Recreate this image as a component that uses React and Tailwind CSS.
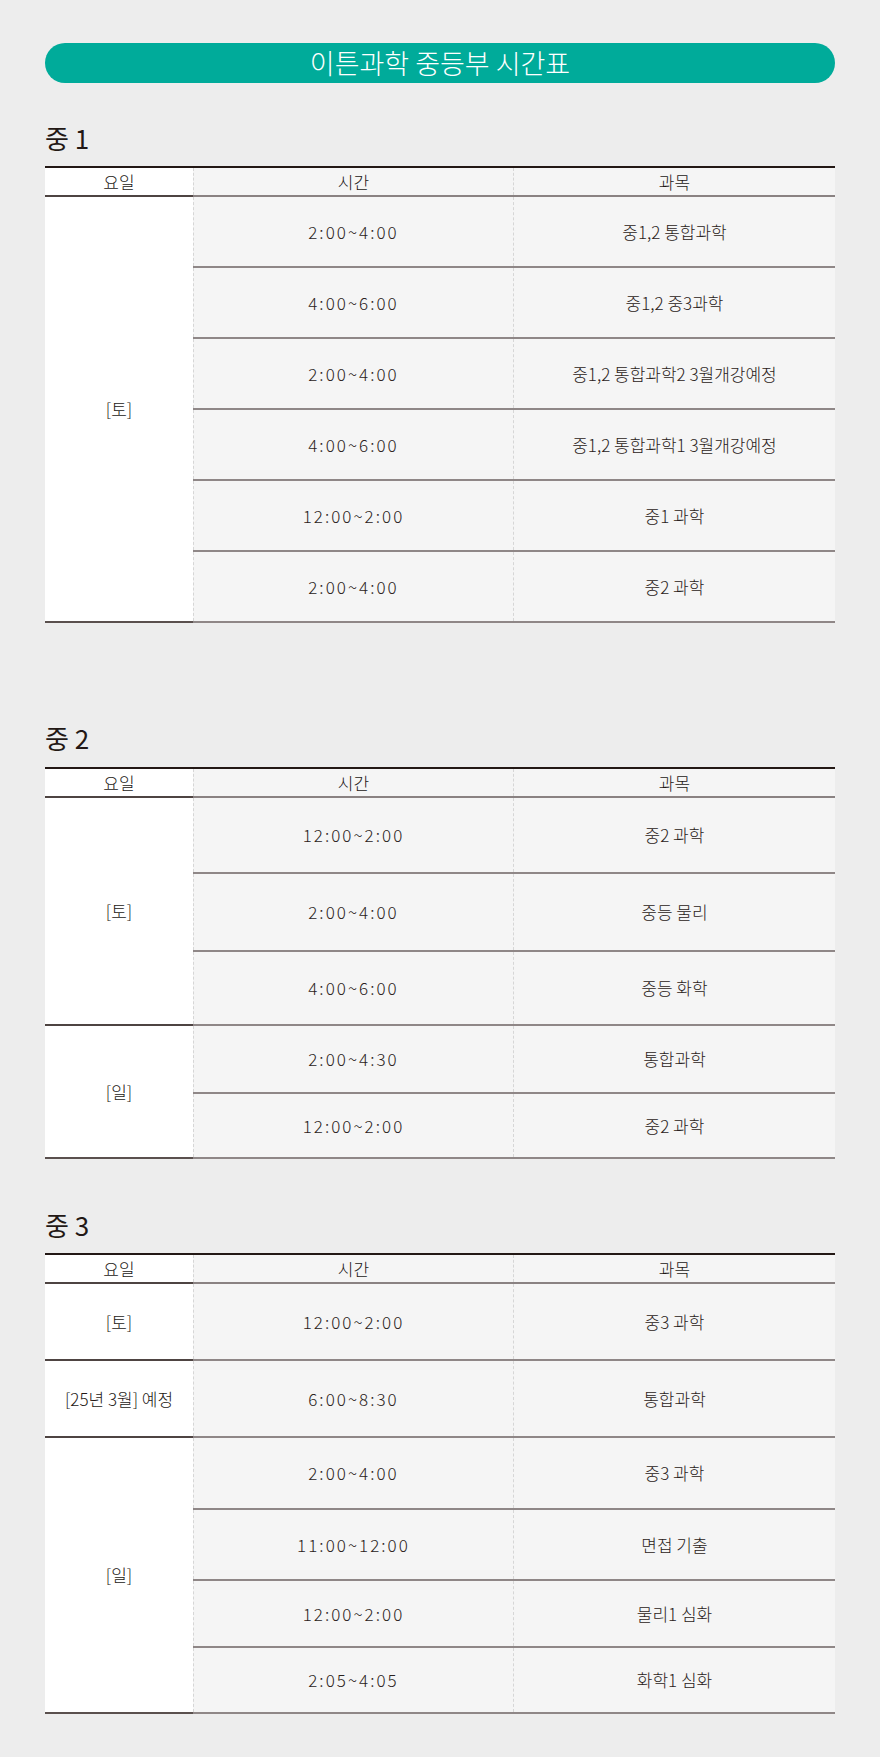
import React from "react";

const FONT = { fontFamily: '"Noto Sans CJK KR", "Noto Sans", sans-serif' };

function Header() {
  return (
    <div className="flex h-[31px] border-t-2 border-[#231815]">
      <div className="w-[148px] bg-white flex items-center justify-center border-b-2 border-[#4e4442] text-[17px] text-[#231815]">
        요일
      </div>
      <div className="flex-1 flex bg-[#f5f5f5] border-b-2 border-[#8a8282]">
        <div className="w-[320px] flex items-center justify-center border-l border-dashed border-[#d6d6d6] text-[17px] text-[#231815]">
          시간
        </div>
        <div className="flex-1 flex items-center justify-center border-l border-dashed border-[#d6d6d6] text-[17px] text-[#231815]">
          과목
        </div>
      </div>
    </div>
  );
}

function Group({ label, rows, last }) {
  return (
    <div className="flex">
      <div
        className={
          "w-[148px] bg-white flex items-center justify-center border-b-2 text-[17px] text-[#231815] " +
          (last ? "border-[#5a504e]" : "border-[#4e4442]")
        }
      >
        {label}
      </div>
      <div className="flex-1 flex flex-col">
        {rows.map((r, i) => (
          <div
            key={i}
            className="flex bg-[#f5f5f5] border-b-2 border-[#8f8787]"
            style={{ height: r.h }}
          >
            <div className="w-[320px] flex items-center justify-center border-l border-dashed border-[#d6d6d6] text-[17px] tracking-[0.12em] text-[#2a2220]">
              {r.t}
            </div>
            <div className="flex-1 flex items-center justify-center border-l border-dashed border-[#d6d6d6] text-[17px] text-[#2a2220]">
              {r.s}
            </div>
          </div>
        ))}
      </div>
    </div>
  );
}

function Table({ groups }) {
  return (
    <div className="w-[790px]">
      <Header />
      {groups.map((g, i) => (
        <Group key={i} label={g.label} rows={g.rows} last={i === groups.length - 1} />
      ))}
    </div>
  );
}

function Heading({ children, className }) {
  return (
    <div className={"h-[40px] flex items-center text-[26px] font-normal text-[#231815] " + className}>
      {children}
    </div>
  );
}

export default function App() {
  const t1 = [
    {
      label: "[토]",
      rows: [
        { t: "2:00~4:00", s: "중1,2 통합과학", h: 71 },
        { t: "4:00~6:00", s: "중1,2 중3과학", h: 71 },
        { t: "2:00~4:00", s: "중1,2 통합과학2 3월개강예정", h: 71 },
        { t: "4:00~6:00", s: "중1,2 통합과학1 3월개강예정", h: 71 },
        { t: "12:00~2:00", s: "중1 과학", h: 71 },
        { t: "2:00~4:00", s: "중2 과학", h: 71 },
      ],
    },
  ];
  const t2 = [
    {
      label: "[토]",
      rows: [
        { t: "12:00~2:00", s: "중2 과학", h: 76 },
        { t: "2:00~4:00", s: "중등 물리", h: 78 },
        { t: "4:00~6:00", s: "중등 화학", h: 74 },
      ],
    },
    {
      label: "[일]",
      rows: [
        { t: "2:00~4:30", s: "통합과학", h: 68 },
        { t: "12:00~2:00", s: "중2 과학", h: 65 },
      ],
    },
  ];
  const t3 = [
    { label: "[토]", rows: [{ t: "12:00~2:00", s: "중3 과학", h: 77 }] },
    { label: "[25년 3월] 예정", rows: [{ t: "6:00~8:30", s: "통합과학", h: 77 }] },
    {
      label: "[일]",
      rows: [
        { t: "2:00~4:00", s: "중3 과학", h: 72 },
        { t: "11:00~12:00", s: "면접 기출", h: 71 },
        { t: "12:00~2:00", s: "물리1 심화", h: 67 },
        { t: "2:05~4:05", s: "화학1 심화", h: 66 },
      ],
    },
  ];

  return (
    <div className="w-[880px] min-h-[1757px] bg-[#ededed] pt-[43px] pb-[42px] px-[45px] font-light" style={FONT}>
      <div className="h-[40px] w-[790px] rounded-full bg-[#00ab9a] flex items-center justify-center text-white text-[27px]">
        이튼과학 중등부 시간표
      </div>

      <Heading className="mt-[34px] mb-[9px]">중 1</Heading>
      <Table groups={t1} />

      <Heading className="mt-[94px] mb-[10px]">중 2</Heading>
      <Table groups={t2} />

      <Heading className="mt-[45px] mb-[9px]">중 3</Heading>
      <Table groups={t3} />
    </div>
  );
}
